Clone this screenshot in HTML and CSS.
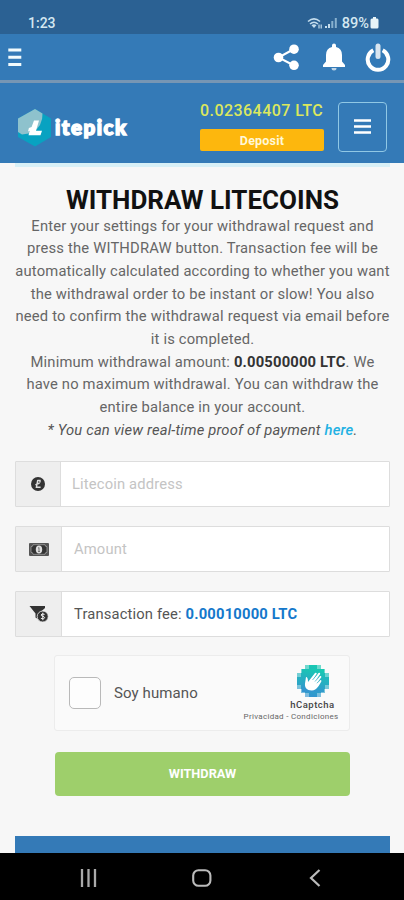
FILE: index.html
```
<!DOCTYPE html>
<html lang="en">
<head>
<meta charset="utf-8">
<title>Litepick</title>
<link rel="stylesheet" href="styles.css">
</head>
<body>
<div class="phone">
  <div class="status">
    <span class="clock">1:23</span>
    <div class="status-right">
      <svg class="wifi" width="16" height="13" viewBox="0 0 16 13"><g fill="none" stroke="#c4dded" stroke-width="1.6"><path d="M1 4.5Q7 -.8 13 4.5"/><path d="M3 7Q7 3.5 11 7"/></g><path d="M4.5 8.2Q7 6.4 9.500 8.2L7 11Z" fill="#c4dded"/><path d="M12 7.5v4M14.2 7.5v4" stroke="#c4dded" stroke-width="1.2"/></svg>
      <svg class="signal" width="13" height="12" viewBox="0 0 13 12"><path d="M0 9h2v2H0zM3 7h2v4H3z" fill="#c4dded"/><path d="M6.3 4h2v7h-2zM9.8 1h2v10h-2z" fill="#88b1cf"/></svg>
      <span class="percent">89%</span>
      <svg width="9" height="12" viewBox="0 0 9 12"><path d="M3 0h3v1.500h1.200Q8.500 1.500 8.500 3v7q0 1.500-1.500 1.500H2Q.5 11.500 .5 10V3Q.5 1.500 2 1.500h1z" fill="#e8f4f8"/></svg>
    </div>
  </div>
  <div class="appbar">
    <svg width="14" height="19" viewBox="0 0 14 19"><path d="M.3 2h13M.3 9.200h13M.3 16.500h13" stroke="#f2fbfd" stroke-width="3"/></svg>
    <div class="actions">
      <svg width="27" height="27" viewBox="0 0 27 27"><path d="M21 5L5.500 13.500L21 21.500" fill="none" stroke="#fff" stroke-width="2"/><g fill="#fff"><circle cx="21" cy="5.200" r="4.800"/><circle cx="5.500" cy="13.500" r="4.800"/><circle cx="21" cy="21.300" r="4.800"/></g></svg>
      <svg width="24" height="28" viewBox="0 0 24 28"><path d="M10 2.500Q10 .5 12 .5T14 2.500V4Q20 5.500 20 12v6.500l3 3.500V24H1v-2l3-3.500V12Q4 5.500 10 4z" fill="#fff"/><path d="M9.500 25h5q0 2.500-2.500 2.500T9.500 25z" fill="#bed5e8"/></svg>
      <svg width="26" height="29" viewBox="0 0 26 29"><path d="M8.300 7.300A10.300 10.300 0 1 0 17.700 7.300" fill="none" stroke="#fff" stroke-width="4"/><path d="M13 3v10.500" stroke="#d9e5f0" stroke-width="5" stroke-linecap="round"/></svg>
    </div>
  </div>
  <div class="header">
    <div class="brand">
      <svg width="34" height="38" viewBox="0 0 34 38"><path d="M17 0L33 9.500v18.500L17 37.500L0 28V9.500z" fill="#08a2c1"/><path d="M17 0L24.500 4.500Q25 17 14 24L4 25.500L0 23V9.500z" fill="#8ec2cd"/><path d="M16 11.500h5L18 21.800h6l-1.500 4.500H10.500l1.300-4.500-1.800.7.900-3.400 2.700-1z" fill="#fff"/></svg>
      <span class="brand-name">itepick</span>
    </div>
    <div class="account">
      <div class="balance">0.02364407 LTC</div>
      <div class="deposit">Deposit</div>
    </div>
    <div class="menu"><svg width="17" height="16" viewBox="0 0 17 16"><path d="M0 1.500h17M0 7.500h17M0 13.500h17" stroke="#fff" stroke-width="2.400"/></svg></div>
  </div>
  <main class="content">
    <div class="edge"></div>
    <h1>WITHDRAW LITECOINS</h1>
    <div class="copy">
      <p>Enter your settings for your withdrawal request and</p>
      <p>press the WITHDRAW button. Transaction fee will be</p>
      <p>automatically calculated according to whether you want</p>
      <p>the withdrawal order to be instant or slow! You also</p>
      <p>need to confirm the withdrawal request via email before</p>
      <p>it is completed.</p>
      <p>Minimum withdrawal amount: <b>0.00500000 LTC</b>. We</p>
      <p>have no maximum withdrawal. You can withdraw the</p>
      <p>entire balance in your account.</p>
      <p><i>* You can view real-time proof of payment <b class="link">here</b>.</i></p>
    </div>
    <div class="field">
      <div class="addon narrow"><svg width="14" height="14" viewBox="0 0 14 14"><circle cx="7" cy="7" r="7" fill="#333"/><path d="M6.800 3L5.400 10.300h4.200M4.400 7.800l4.200-1.800M6.800 3.500h2.200v2" fill="none" stroke="#ddd" stroke-width="1.400"/></svg></div>
      <div class="input hint">Litecoin address</div>
    </div>
    <div class="field">
      <div class="addon"><svg width="20" height="13" viewBox="0 0 20 13"><rect width="20" height="13" rx="1" fill="#555"/><path d="M4 1.700h12q0 2 2 2v5.600q-2 0-2 2H4q0-2-2-2V3.700q2 0 2-2z" fill="#333" stroke="#aaa" stroke-width=".7"/><ellipse cx="10" cy="6.500" rx="3.200" ry="4" fill="#ddd"/><path d="M10 4.500v4M9 5.300l1-.8M9 8.500h2" stroke="#777"/></svg></div>
      <div class="input hint">Amount</div>
    </div>
    <div class="field">
      <div class="addon"><svg width="20" height="18" viewBox="0 0 20 18"><path d="M.5 1h15.500L16 3L10.500 8v7L6.500 12.500V8.500z" fill="#333"/><circle cx="13.700" cy="11.500" r="5.500" fill="#333" stroke="#eee" stroke-width=".8"/><path d="M15.600 9.400q-3.500-1.200-3.500.6c0 1.600 3.500 1 3.500 2.700q0 1.800-3.700.7M13.800 7.700v7.500" fill="none" stroke="#eee"/></svg></div>
      <div class="input"><span>Transaction fee: <b>0.00010000 LTC</b></span></div>
    </div>
    <div class="captcha">
      <div class="check"></div>
      <span class="human">Soy humano</span>
      <div class="hc">
        <svg width="32" height="32" viewBox="0 0 32 32"><defs><linearGradient id="g" x1=".6" y1="0" x2=".4" y2="1"><stop offset="0" stop-color="#18c9b2"/><stop offset="1" stop-color="#3494d0"/></linearGradient></defs><path d="M8 0h16v4h4v4h4v16h-4v4h-4v4H8v-4H4v-4H0V8h4V4h4z" fill="url(#g)" opacity=".62"/><path d="M12 0h8v4h4v4h4v4h4v8h-4v4h-4v4h-4v4h-8v-4H8v-4H4v-4H0v-8h4V8h4V4h4z" fill="url(#g)"/><path d="M5 4h22v23H5z" fill="url(#g)"/><path d="M9 12q2 0 2 5l7-9q1.500-.8 1.800.8L16.500 14l5-6q1.700-.6 1.700 1L19 15l4-4q1.600-.3 1.300 1.200L20.800 17l2.700-2q1.400 0 .8 1.500C22 20 20 25.500 15 25.500c-5 .2-7.500-3-7-7z" fill="#fff"/><path d="M15.500 15L20 9.500M18 16.500l4.500-5M19.800 18.200l3-2.700" stroke="#2aabc4" stroke-width=".7"/></svg>
        <span class="hc-name">hCaptcha</span>
        <span class="hc-links">Privacidad - Condiciones</span>
      </div>
    </div>
    <div class="withdraw">WITHDRAW</div>
    <div class="panel"></div>
  </main>
  <div class="nav">
    <svg width="18" height="18" viewBox="0 0 18 18"><path d="M2 0v18M8.500 0v18M15 0v18" stroke="#aaa" stroke-width="2.300"/></svg>
    <svg width="23" height="18" viewBox="0 0 23 18"><rect x="1.200" y="1.200" width="17.200" height="15.600" rx="5.300" fill="none" stroke="#bbb" stroke-width="2.100"/></svg>
    <svg width="16" height="18" viewBox="0 0 16 18"><path d="M10.500 1L2 9l8.500 8" fill="none" stroke="#bbb" stroke-width="2.200"/></svg>
  </div>
</div>
</body>
</html>
```

FILE: styles.css
```
* { box-sizing: border-box; }
body { margin: 0; font-family: Roboto, "Liberation Sans", sans-serif; }
svg { display: block; flex: none; }
.phone { width: 404px; height: 900px; overflow: hidden; display: flex; flex-direction: column; background: #f7f7f7; }
.status { height: 34px; flex: none; background: #2b6193; display: flex; justify-content: space-between; align-items: center; padding: 12px 25px 0 28px; color: #d4e8f1; font-size: 14px; font-weight: 500; }
.status-right { display: flex; align-items: center; }
.wifi { margin-right: 2px; }
.signal { margin-right: 4px; }
.percent { font-size: 14.500px; margin-right: 1px; }
.appbar { height: 46px; flex: none; background: #347ab7; display: flex; justify-content: space-between; align-items: center; padding: 0 13px 0 7.500px; }
.actions { display: flex; align-items: center; gap: 22px; }
.actions svg:last-child { margin-left: -3px; }
.header { height: 83px; flex: none; background: #347ab7; border-top: 3px solid #7796b4; display: flex; align-items: flex-start; padding: 0 17px 0 18px; }
.brand { display: flex; align-items: center; margin-top: 26px; width: 182px; }
.brand-name { font-family: Lato, sans-serif; font-weight: 900; font-size: 20.500px; line-height: 24px; color: #fff; -webkit-text-stroke: 1.500px #fff; margin: -2px 0 0 3px; letter-spacing: 1.500px; }
.account { width: 124px; margin-top: 18px; }
.balance { font-size: 16px; line-height: 20px; font-weight: 500; color: #dbe75e; letter-spacing: .45px; white-space: nowrap; }
.deposit { margin-top: 8px; height: 22px; background: #fdb70d; border-radius: 2px; color: #fff8d8; font-size: 12.500px; line-height: 23px; font-weight: 700; text-align: center; letter-spacing: .2px; }
.menu { margin: 19px 0 0 14px; width: 49px; height: 50px; border: 1.500px solid #90c8e5; border-radius: 4px; display: flex; justify-content: center; align-items: center; }
.content { height: 690px; flex: none; padding: 0 14px 0 15px; display: flex; flex-direction: column; }
.edge { height: 4px; flex: none; background: #d7f0f7; }
h1 { margin: 17.500px 0 0; height: 30px; flex: none; font-size: 26px; line-height: 31px; font-weight: 700; color: #111; text-align: center; white-space: nowrap; }
.copy { height: 227.500px; flex: none; color: #666; font-size: 14.750px; letter-spacing: .18px; text-align: center; }
.copy p { margin: 0 -5px; line-height: 22.700px; white-space: nowrap; }
.copy p > b { color: #333; }
.copy i { color: #555; }
.link { color: #22b1e3; font-weight: 500; }
.field { display: flex; height: 46px; margin-top: 19px; flex: none; border: 1px solid #ddd; border-radius: 1px; }
.addon { width: 46px; background: #eee; border-right: 1px solid #ddd; display: flex; align-items: center; justify-content: center; }
.narrow { width: 45px; }
.input { flex: 1; background: #fff; padding-left: 12px; display: flex; align-items: center; font-size: 14.750px; letter-spacing: .15px; color: #555; white-space: nowrap; }
.narrow + .input { padding-left: 11px; }
.input b { color: #1478cb; letter-spacing: .2px; }
.input.hint { color: #c4c4c4; }
.captcha { margin: 18px 40px 0 39px; height: 76px; flex: none; border: 1px solid #ececec; border-radius: 3px; background: #fafafa; display: flex; align-items: center; padding-left: 14px; }
.check { width: 32px; height: 32px; border: 1.500px solid #b9b9b9; border-radius: 5px; background: #fdfdfd; }
.human { margin-left: 13px; color: #555; font-size: 15px; letter-spacing: .1px; }
.hc { margin: 0 10px 0 auto; width: 96px; display: flex; flex-direction: column; align-items: center; }
.hc svg { margin-left: 43px; }
.hc-name { margin: 2px 0 0 43px; font-size: 9.500px; line-height: 12px; font-weight: 500; color: #444; letter-spacing: .5px; }
.hc-links { font-size: 8px; line-height: 11px; color: #666; white-space: nowrap; letter-spacing: .3px; }
.withdraw { margin: 21px 40px 0; height: 44px; flex: none; border-radius: 4px; background: #9ecf6b; color: #fff; font-size: 12.750px; font-weight: 700; line-height: 43px; text-align: center; }
.panel { margin-top: 40px; height: 18px; background: #347ab7; }
.nav { height: 47px; background: #000; display: flex; align-items: center; padding: 3px 79px 0 80px; justify-content: space-between; }
```
